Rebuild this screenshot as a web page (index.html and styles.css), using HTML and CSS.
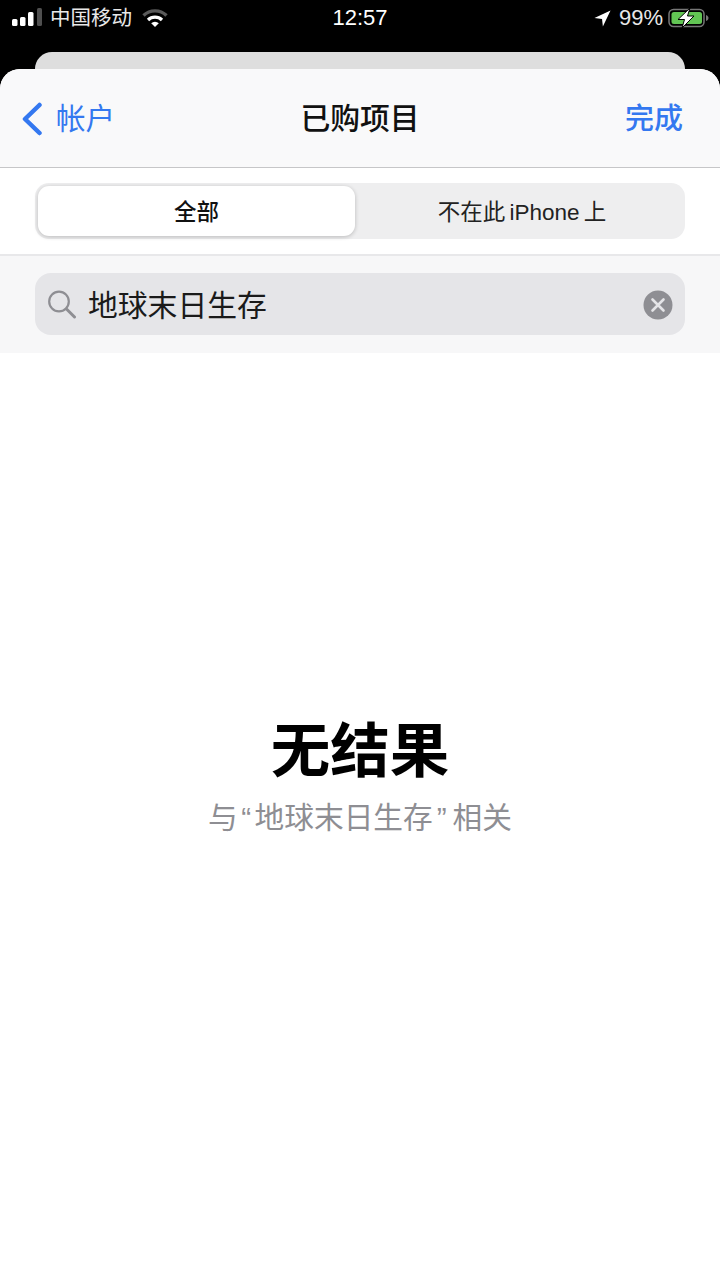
FILE: index.html
```html
<!DOCTYPE html>
<html lang="zh">
  <head>
    <meta charset="UTF-8" />
    <title>已购项目</title>
    <link rel="stylesheet" href="styles.css">
  </head>
  <body>
    <div class="statusBar">
      <div class="statusLeft">
        <svg class="signal" width="30" height="20" viewBox="0 0 30 20">
          <rect x="0" y="11" width="5.500" height="7" rx="1.500" fill="#fff"/>
          <rect x="8" y="9" width="5.500" height="9" rx="1.500" fill="#fff"/>
          <rect x="16" y="4" width="5.500" height="14" rx="1.500" fill="#fff"/>
          <rect x="25" y="0" width="5" height="18" rx="1.500" fill="#4f4f4f"/>
        </svg>
        <span class="carrier">中国移动</span>
        <svg class="wifi" width="26" height="20" viewBox="0 0 26 20">
          <path d="M1.500 7.500a16.500 16.500 0 0 1 23 0" fill="none" stroke="#5a5a5a" stroke-width="3.400"/>
          <path d="M6 12a10 10 0 0 1 14 0" fill="none" stroke="#fff" stroke-width="3.200"/>
          <path d="M9.200 15.200a5.400 5.400 0 0 1 7.600 0L13 19z" fill="#fff"/>
        </svg>
      </div>
      <div class="time">12:57</div>
      <div class="statusRight">
        <svg class="arrow" width="17" height="17" viewBox="0 0 18 18">
          <path d="M17.500.5 .5 8.500l8 1 .9 8z" fill="#fff"/>
        </svg>
        <span class="percent">99%</span>
        <svg class="battery" width="41" height="20" viewBox="0 0 41 20">
          <rect x="1" y="1.500" width="35" height="17" rx="4.500" fill="none" stroke="#777" stroke-width="1.500"/>
          <rect x="3.500" y="4" width="30.500" height="12" rx="2.500" fill="#62c554"/>
          <path d="M38 7v6c1.500-.5 2.500-1.500 2.500-3s-1-2.500-2.500-3z" fill="#777"/>
          <path d="M22 0 10 11.500h6.500L14 20 26 8h-6.500z" fill="#fff" stroke="#000" stroke-width="1"/>
        </svg>
      </div>
    </div>

    <div class="backCard"></div>

    <div class="sheet">
      <div class="navBar">
        <div class="navBack">
          <svg width="22" height="34" viewBox="0 0 22 34">
            <path d="M18.500 3 4 17l14.500 14" fill="none" stroke="#3478f0" stroke-width="4.500" stroke-linecap="round" stroke-linejoin="round"/>
          </svg>
          <span>帐户</span>
        </div>
        <div class="navTitle">已购项目</div>
        <div class="navDone">完成</div>
      </div>

      <div class="segmentRow">
        <div class="segment">
          <div class="segItem active">全部</div>
          <div class="segItem other">不在此 iPhone 上</div>
        </div>
      </div>

      <div class="searchRow">
        <div class="searchBox">
          <svg class="searchIcon" width="30" height="30" viewBox="0 0 30 30">
            <circle cx="12" cy="12.500" r="9.800" fill="none" stroke="#8e8e93" stroke-width="2.200"/>
            <path d="M19.500 20l8 8" stroke="#8e8e93" stroke-width="3" stroke-linecap="round"/>
          </svg>
          <span class="searchText">地球末日生存</span>
          <svg class="clearIcon" width="30" height="30" viewBox="0 0 30 30">
            <circle cx="15" cy="15" r="14.500" fill="#8e8e93"/>
            <path d="M9.500 9.500l11 11M20.500 9.500l-11 11" stroke="#e4e4e7" stroke-width="2.600" stroke-linecap="round"/>
          </svg>
        </div>
      </div>

      <div class="empty">
        <div class="emptyTitle">无结果</div>
        <div class="emptySub">与<span class="quoteOpen">“</span>地球末日生存<span class="quoteClose">”</span>相关</div>
      </div>
    </div>
  </body>
</html>
```

FILE: styles.css
```css
* {
  box-sizing: border-box;
}
html,
body {
  margin: 0;
  height: 1280px;
  overflow: hidden;
}
body {
  display: flex;
  flex-direction: column;
  background-color: #000;
  font-family: "Liberation Sans", "Noto Sans CJK SC", sans-serif;
}

/* status bar */
.statusBar {
  height: 52px;
  display: flex;
  align-items: flex-start;
  justify-content: space-between;
  padding: 5px 12px 0 12px;
  color: #e8e8e8;
  font-size: 20.500px;
  line-height: 26px;
  flex: none;
}
.statusLeft,
.statusRight {
  display: flex;
  align-items: center;
  width: 200px;
}
.statusRight {
  justify-content: flex-end;
}
.signal {
  margin-right: 8px;
}
.wifi {
  margin-left: 10px;
}
.time {
  color: #fff;
  font-size: 22px;
}
.arrow {
  margin-right: 8px;
}
.percent {
  font-size: 22px;
}
.battery {
  margin-left: 5px;
  margin-right: -1px;
}

.backCard {
  height: 17px;
  margin: 0 35px;
  background-color: #dedede;
  border-radius: 18px 18px 0 0;
  flex: none;
}

.sheet {
  flex: 1;
  display: flex;
  flex-direction: column;
  background-color: #fff;
  border-radius: 20px 20px 0 0;
  overflow: hidden;
}

/* nav */
.navBar {
  height: 99px;
  display: grid;
  grid-template-columns: 1fr auto 1fr;
  align-items: center;
  padding: 0 37px;
  background-color: #f9f9fa;
  border-bottom: 1px solid #c6c6c8;
  flex: none;
}
.navBack {
  display: flex;
  align-items: center;
  gap: 13px;
  margin-left: -16px;
  margin-top: 2px;
  color: #3478f0;
  font-size: 29.500px;
  line-height: 36px;
}
.navTitle {
  margin-top: 2px;
  font-size: 29.800px;
  line-height: 36px;
  font-weight: 500;
  color: #111;
}
.navDone {
  justify-self: end;
  margin-top: 2px;
  color: #3478f0;
  font-size: 29px;
  line-height: 36px;
  font-weight: 500;
}

/* segment */
.segmentRow {
  height: 88px;
  padding: 15px 35px 0 35px;
  border-bottom: 2px solid #e8e8ea;
  flex: none;
}
.segment {
  height: 56px;
  display: flex;
  padding: 3px;
  background-color: #eeeeef;
  border-radius: 14px;
}
.segItem {
  flex: 1;
  display: flex;
  align-items: center;
  justify-content: center;
  padding-bottom: 3px;
  font-size: 22.500px;
  color: #222;
}
.segItem.other {
  padding-left: 7px;
  word-spacing: -2px;
}
.segItem.active {
  flex: none;
  width: 317px;
  background-color: #fff;
  border-radius: 11px;
  box-shadow: 0 1px 4px rgba(0, 0, 0, 0.22);
  font-weight: 500;
  color: #111;
}

/* search */
.searchRow {
  height: 97px;
  padding: 17px 35px 0 35px;
  background-color: #f7f7f8;
  flex: none;
}
.searchBox {
  height: 62px;
  display: flex;
  align-items: center;
  padding: 0 12px 0 12px;
  background-color: #e5e5e8;
  border-radius: 16px;
}
.searchIcon {
  flex: none;
}
.clearIcon {
  margin-top: 2px;
}
.searchText {
  flex: 1;
  margin-left: 11px;
  padding-top: 3px;
  font-size: 29.800px;
  line-height: 40px;
  color: #1a1a1a;
}

/* empty state */
.empty {
  display: flex;
  flex-direction: column;
  align-items: center;
  padding-top: 359px;
}
.emptyTitle {
  font-size: 59.500px;
  line-height: 80px;
  font-weight: 700;
  color: #000;
}
.emptySub {
  margin-top: 6px;
  font-size: 29.700px;
  line-height: 40px;
  color: #8e8e93;
}
.quoteOpen {
  margin: 0 3.500px 0 3.500px;
}
.quoteClose {
  margin: 0 6px 0 4px;
}
```
